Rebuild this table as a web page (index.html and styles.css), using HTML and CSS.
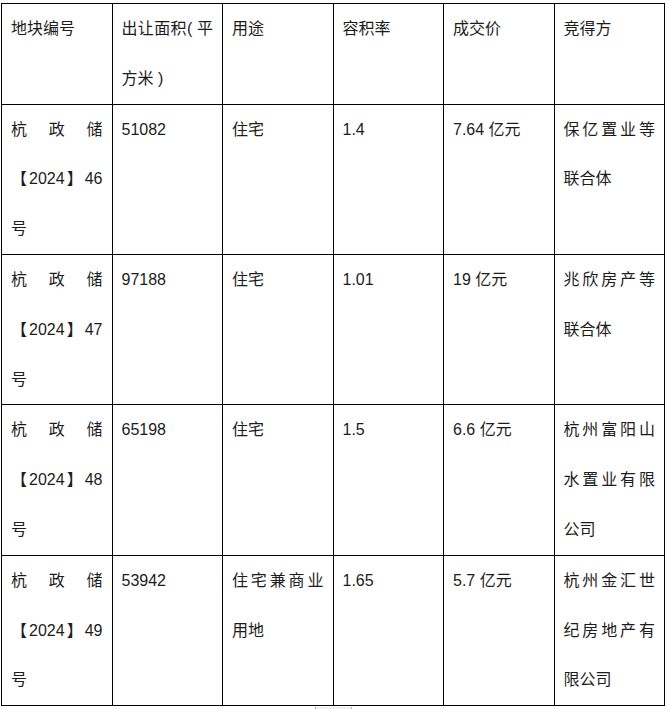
FILE: index.html
```html
<!DOCTYPE html>
<html lang="zh-CN">
<head>
<meta charset="utf-8">
<title>地块出让</title>
<link rel="stylesheet" href="styles.css">
</head>
<body>
<div class="page">
  <table class="land">
    <colgroup>
      <col><col><col><col><col><col>
    </colgroup>
    <tr class="head">
      <td>地块编号</td>
      <td>出让面积( 平方米 )</td>
      <td>用途</td>
      <td>容积率</td>
      <td>成交价</td>
      <td>竞得方</td>
    </tr>
    <tr>
      <td>杭政储【2024】46号</td>
      <td>51082</td>
      <td>住宅</td>
      <td>1.4</td>
      <td>7.64 亿元</td>
      <td>保亿置业等联合体</td>
    </tr>
    <tr>
      <td>杭政储【2024】47号</td>
      <td>97188</td>
      <td>住宅</td>
      <td>1.01</td>
      <td>19 亿元</td>
      <td>兆欣房产等联合体</td>
    </tr>
    <tr>
      <td>杭政储【2024】48号</td>
      <td>65198</td>
      <td>住宅</td>
      <td>1.5</td>
      <td>6.6 亿元</td>
      <td>杭州富阳山水置业有限公司</td>
    </tr>
    <tr>
      <td>杭政储【2024】49号</td>
      <td>53942</td>
      <td>住宅兼商业用地</td>
      <td>1.65</td>
      <td>5.7 亿元</td>
      <td>杭州金汇世纪房地产有限公司</td>
    </tr>
  </table>
  <div class="scrollmark"></div>
</div>
</body>
</html>
```

FILE: styles.css
```css
html, body {
  margin: 0;
  padding: 0;
  background: #ffffff;
}

.page {
  padding: 3px 0 0 1px;
}

.land {
  border-collapse: collapse;
  table-layout: fixed;
  width: 664px;
  font-family: "Liberation Sans", "Noto Sans CJK SC", sans-serif;
  font-size: 16px;
  line-height: 49.8px;
  color: #1c1c1c;
}

.land td {
  border: 1px solid #000000;
  padding: 0 9px;
  vertical-align: top;
  text-align: justify;
  word-break: normal;
}

.scrollmark {
  margin: 1px 0 0 314px;
  width: 35px;
  height: 2px;
  background: #f1f1f1;
  border-left: 1px solid #b5b5b5;
  border-right: 1px solid #b5b5b5;
}
```
